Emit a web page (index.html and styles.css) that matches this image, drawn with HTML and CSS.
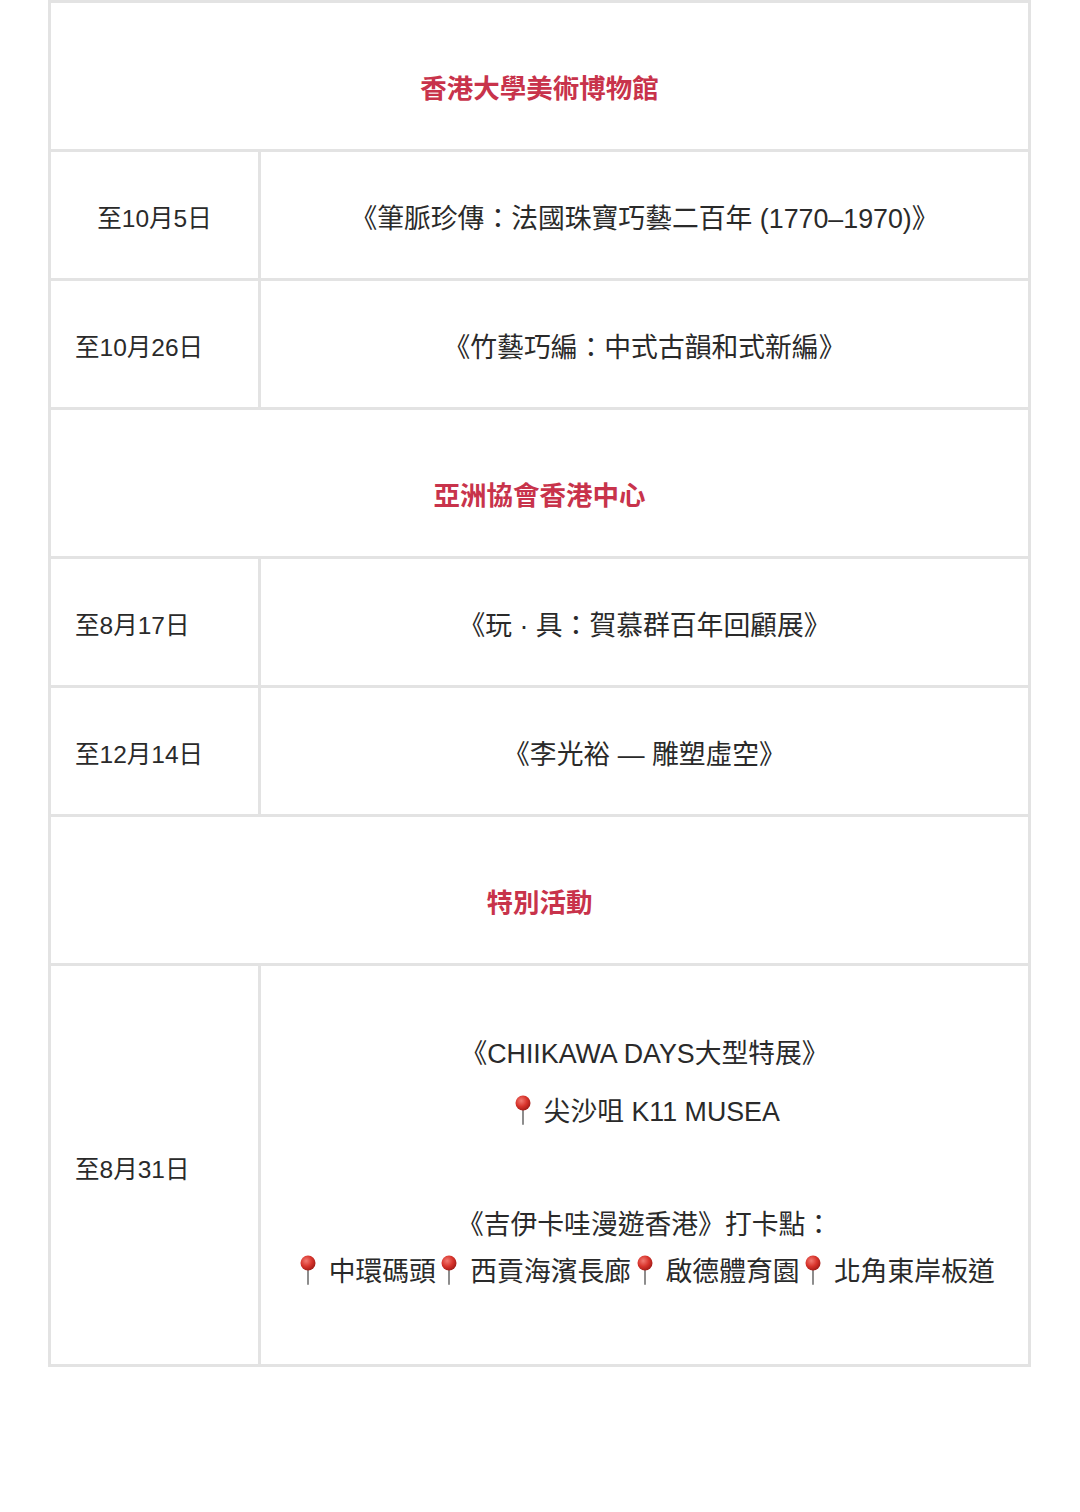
FILE: index.html
```html
<!DOCTYPE html>
<html lang="zh-Hant">
<head>
<meta charset="utf-8">
<link rel="stylesheet" href="styles.css">
</head>
<body>
<table class="sched">
  <colgroup><col class="c-date"><col class="c-desc"></colgroup>
  <tr class="head"><td colspan="2">香港大學美術博物館</td></tr>
  <tr class="row"><td class="date date-first">至10月5日</td><td class="desc">《筆脈珍傳：法國珠寶巧藝二百年 (1770–1970)》</td></tr>
  <tr class="row"><td class="date">至10月26日</td><td class="desc">《竹藝巧編：中式古韻和式新編》</td></tr>
  <tr class="head"><td colspan="2">亞洲協會香港中心</td></tr>
  <tr class="row"><td class="date">至8月17日</td><td class="desc">《玩 · 具：賀慕群百年回顧展》</td></tr>
  <tr class="row"><td class="date">至12月14日</td><td class="desc">《李光裕 — 雕塑虛空》</td></tr>
  <tr class="head"><td colspan="2">特別活動</td></tr>
  <tr class="big"><td class="date">至8月31日</td><td class="desc">
    <p>《CHIIKAWA DAYS大型特展》</p>
    <p><span class="pin"><svg viewBox="0 0 20 30" width="20" height="30"><defs><radialGradient id="g" cx="0.38" cy="0.35" r="0.7"><stop offset="0" stop-color="#f27a72"/><stop offset="0.55" stop-color="#d8342c"/><stop offset="1" stop-color="#9e1a16"/></radialGradient></defs><rect x="9" y="12" width="2" height="18" rx="1" fill="#8d8d8d"/><circle cx="10" cy="8" r="7.5" fill="url(#g)"/></svg></span> 尖沙咀 K11 MUSEA</p>
    <p class="blank">&nbsp;</p>
    <p>《吉伊卡哇漫遊香港》打卡點：<br><span class="pin"><svg viewBox="0 0 20 30" width="20" height="30"><rect x="9" y="12" width="2" height="18" rx="1" fill="#8d8d8d"/><circle cx="10" cy="8" r="7.5" fill="url(#g)"/></svg></span> 中環碼頭<span class="pin"><svg viewBox="0 0 20 30" width="20" height="30"><rect x="9" y="12" width="2" height="18" rx="1" fill="#8d8d8d"/><circle cx="10" cy="8" r="7.5" fill="url(#g)"/></svg></span> 西貢海濱長廊<span class="pin"><svg viewBox="0 0 20 30" width="20" height="30"><rect x="9" y="12" width="2" height="18" rx="1" fill="#8d8d8d"/><circle cx="10" cy="8" r="7.5" fill="url(#g)"/></svg></span> 啟德體育園<span class="pin"><svg viewBox="0 0 20 30" width="20" height="30"><rect x="9" y="12" width="2" height="18" rx="1" fill="#8d8d8d"/><circle cx="10" cy="8" r="7.5" fill="url(#g)"/></svg></span> 北角東岸板道</p>
  </td></tr>
</table>
</body>
</html>
```
FILE: styles.css
```css
html, body {
  margin: 0;
  padding: 0;
  background: #ffffff;
}
body {
  font-family: "Liberation Sans", "Noto Sans CJK TC", sans-serif;
  color: #2a2a2a;
}
.sched {
  border-collapse: collapse;
  margin: 0 0 0 48px;
  width: 983px;
  table-layout: fixed;
}
.c-date { width: 210px; }
.sched td {
  border: 3px solid #e3e3e3;
  padding: 0;
  vertical-align: middle;
}
.head td {
  height: 149px;
  text-align: center;
  color: #c8334b;
  font-weight: 700;
  font-size: 26.5px;
  padding-top: 20px;
  box-sizing: border-box;
}
.row td {
  height: 129px;
  box-sizing: border-box;
  padding-top: 2px;
}
.date {
  font-size: 24.5px;
  padding-left: 24px !important;
  color: #2a2a2a;
}
.date-first {
  text-align: center;
  padding-left: 0 !important;
}
.desc {
  text-align: center;
  font-size: 26.8px;
}
.big td {
  height: 401px;
  box-sizing: border-box;
}
.big .date { padding-top: 4px; }
.big .desc { padding-bottom: 4px; }
.big .desc p {
  margin: 0 0 11px;
  line-height: 47px;
}
.big .desc p.blank { margin-bottom: 8px; }
.big .desc p:last-child { margin-bottom: 0; }
.pin {
  display: inline-block;
  width: 27px;
  height: 30px;
  vertical-align: -4px;
  text-align: center;
}
.pin svg { display: block; margin: 0 auto; }
```
